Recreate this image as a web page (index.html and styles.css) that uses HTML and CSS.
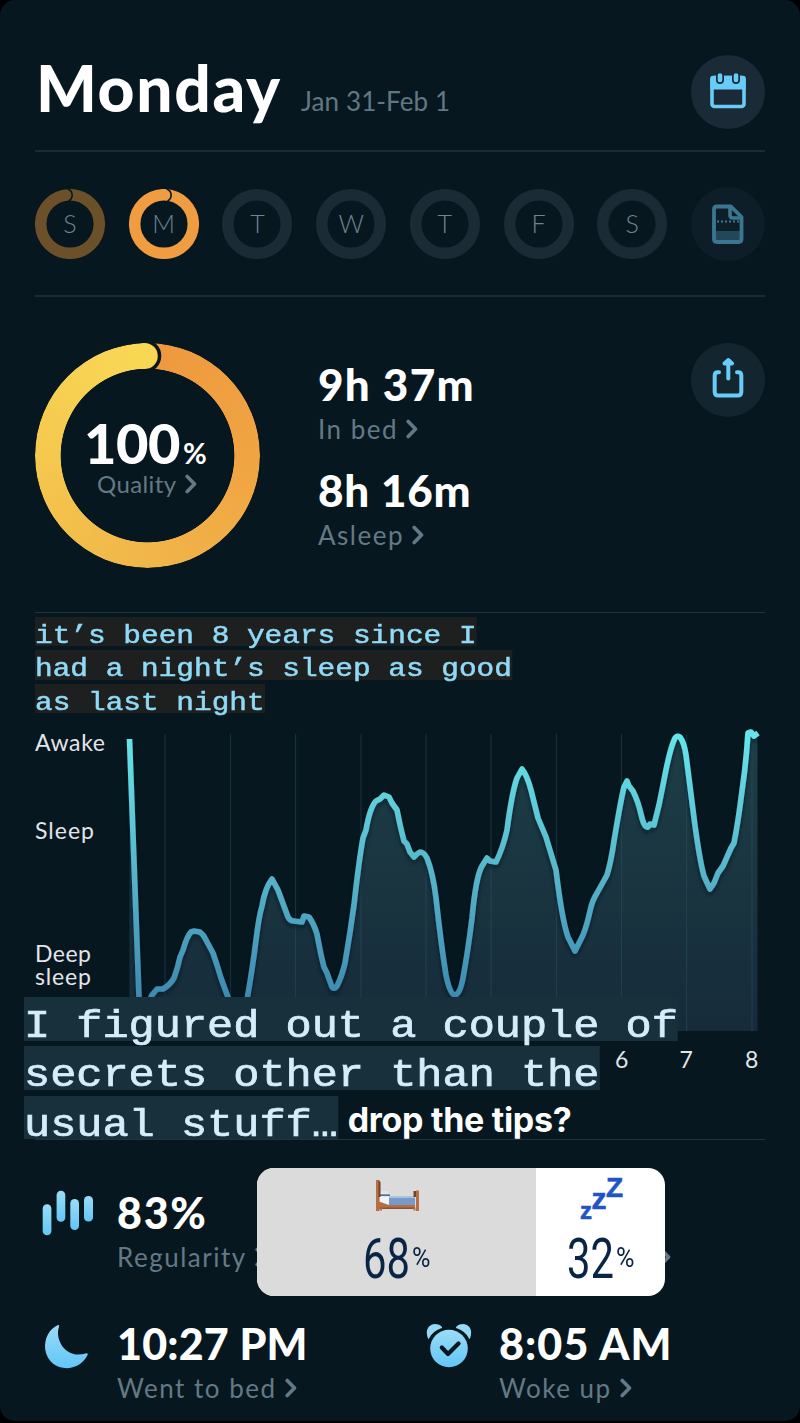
FILE: index.html
```html
<!DOCTYPE html>
<html lang="en">
<head>
<meta charset="utf-8">
<title>Sleep journal</title>
<link rel="stylesheet" href="styles.css">
</head>
<body>
<main class="screen">
  <header class="header">
    <h1 class="title">Monday</h1>
    <span class="date">Jan 31-Feb 1</span>
    <button class="round-btn" aria-label="Calendar">
      <svg width="74" height="74" viewBox="0 0 74 74">
        <rect x="21" y="22.5" width="32" height="29" rx="2.5" fill="none" stroke="#69cbf8" stroke-width="3.6"/>
        <path d="M19.200 23.500q0-2.800 2.800-2.800h30q2.800 0 2.800 2.800V34.600H19.200z" fill="#69cbf8"/>
        <path d="M29 21v4M45 21v4" stroke="#1a2a36" stroke-width="8" stroke-linecap="round"/>
        <path d="M29 20.500v4.500M45 20.500v4.500" stroke="#69cbf8" stroke-width="4.600" stroke-linecap="round"/>
      </svg>
    </button>
  </header>

  <nav class="days">
    <div class="day past"><svg viewBox="0 0 70 70"><circle cx="35" cy="35" r="29.300"/><path d="M32.500 0C38.500 2 38.500 9.500 33.500 12"/></svg><span>S</span></div>
    <div class="day current"><svg viewBox="0 0 70 70"><circle cx="35" cy="35" r="29.300"/><path d="M37.500 0C43.500 2 43.500 9.500 38.500 12"/></svg><span>M</span></div>
    <div class="day"><svg viewBox="0 0 70 70"><circle cx="35" cy="35" r="29.300"/></svg><span>T</span></div>
    <div class="day"><svg viewBox="0 0 70 70"><circle cx="35" cy="35" r="29.300"/></svg><span>W</span></div>
    <div class="day"><svg viewBox="0 0 70 70"><circle cx="35" cy="35" r="29.300"/></svg><span>T</span></div>
    <div class="day"><svg viewBox="0 0 70 70"><circle cx="35" cy="35" r="29.300"/></svg><span>F</span></div>
    <div class="day"><svg viewBox="0 0 70 70"><circle cx="35" cy="35" r="29.300"/></svg><span>S</span></div>
    <button class="round-btn dim" aria-label="Notes">
      <svg width="74" height="74" viewBox="0 0 74 74">
        <path d="M24 44h26v11H24z" fill="#234658"/>
        <path d="M26 19.500h14L50.500 30v22q0 3-3 3H26q-3 0-3-3V22.500q0-3 3-3z" fill="none" stroke="#3b7691" stroke-width="3.800" stroke-linejoin="round"/>
        <path d="M39 20v8q0 3 3 3h8" fill="none" stroke="#3b7691" stroke-width="3.600"/>
        <path d="M26 34.500h22" stroke="#3b7691" stroke-width="2" stroke-dasharray="2 2"/>
      </svg>
    </button>
  </nav>

  <section class="summary">
    <div class="donut">
      <div class="donut-ring"></div>
      <svg class="donut-cap" viewBox="0 0 225 225">
        <circle cx="109.500" cy="13" r="13" fill="#f8d753"/>
        <path d="M109.800-1.800A14.800 14.800 0 0 1 109.800 27.800" fill="none" stroke="#07171f" stroke-width="3.400"/>
      </svg>
      <div class="donut-text">
        <div class="score">100<small>%</small></div>
        <div class="label quality">Quality<svg class="chev" viewBox="0 0 12 20"><path d="M2.200 2.500L9.500 10l-7.300 7.500"/></svg></div>
      </div>
    </div>
    <div class="durations">
      <div class="value v1">9h 37m</div>
      <div class="label l1">In bed<svg class="chev" viewBox="0 0 12 20"><path d="M2.200 2.500L9.500 10l-7.300 7.500"/></svg></div>
      <div class="value second v2">8h 16m</div>
      <div class="label l2">Asleep<svg class="chev" viewBox="0 0 12 20"><path d="M2.200 2.500L9.500 10l-7.300 7.500"/></svg></div>
    </div>
    <button class="round-btn share" aria-label="Share">
      <svg width="74" height="74" viewBox="0 0 74 74" fill="none" stroke="#69cbf8" stroke-width="4" stroke-linecap="round" stroke-linejoin="round">
        <path d="M28 29.300h-1q-3.300 0-3.300 3.300v16.500q0 3.500 3.500 3.500h19.600q3.500 0 3.500-3.500V32.600q0-3.300-3.300-3.300h-1"/>
        <path d="M37.300 35.500V20"/><path d="M33.500 20.500l3.800-3.500 3.800 3.500z" fill="#69cbf8"/>
      </svg>
    </button>
  </section>

  <section class="analysis">
    <div class="note"><p>it’s been 8 years since I</p><p>had a night’s sleep as good</p><p>as last night</p></div>
    <svg class="chart" viewBox="35 722 730 360" role="img">
      <defs>
        <linearGradient id="stroke" gradientUnits="userSpaceOnUse" x1="0" y1="735" x2="0" y2="1000"><stop offset="0" stop-color="#65e5eb"/><stop offset=".5" stop-color="#57b7cb"/><stop offset="1" stop-color="#3d89b0"/></linearGradient>
        <linearGradient id="area" gradientUnits="userSpaceOnUse" x1="0" y1="735" x2="0" y2="1031"><stop offset="0" stop-color="#1d3e46"/><stop offset="1" stop-color="#162b3a"/></linearGradient>
        <filter id="shade" x="-5%" y="-5%" width="110%" height="115%"><feDropShadow dx="0" dy="3" stdDeviation="2" flood-color="#04121a" flood-opacity=".55"/></filter>
      </defs>
      <path fill="url(#area)" d="M129.500 739L140 1010L151 997L157 989L163 989L172 980L180 955L187 938L193 931L200 932L207 941L214 954L220 970L229 997L238 1015L247 997L252 970L256 940L261 908L266 888L272 878L278 890L284 905L290 920L302 922L304 916L310 918L316 932L322 955L327 973L334 989L341 976L347 950L354 900L359 858L364 832L370 810L375 801L380 798L384 795L389 797L396 808L400 823L404 841L410 852L414 857L420 852L426 857L432 875L438 915L444 960L450 989L455 995L460 987L466 960L472 910L477 880L481 867L487 860L495 862L501 850L507 825L513 792L518 775L522 769L528 780L534 798L540 823L548 842L556 870L562 905L568 935L575 951L583 935L588 918L592 902L598 890L607 875L612 855L618 818L622 795L627 781L634 792L639 805L643 820L648 827L654 825L659 805L664 780L669 755L673 742L677 736L681 737L685 748L691 790L698 845L704 876L710 889L717 876L724 862L733 842L740 805L745 765L749 735H757.500V1031H129.500z"/>
      <path stroke="#2c5a68" stroke-opacity=".38" stroke-width="1.200" d="M165 734V1031M230.500 734V1031M295.500 734V1031M361 734V1031M426 734V1031M491 734V1031M556.500 734V1031M621.500 734V1031M686.500 734V1031M752 734V1031"/>
      <path filter="url(#shade)" fill="none" stroke="url(#stroke)" stroke-width="5.600" stroke-linejoin="round" d="M129.500 739L139 997L142 1010L148 1004L152 995L157 989L163 989Q170 985 174 978Q178 967 180 957L183 950Q187 936 191 932L194 931L200 932Q204 935 206 940L213 953L217 965L221 978L229 1000L238 1020L247 1000Q253 965 256 940Q259 916 262 906Q265 888 272 879L278 890L288 917Q290 921 294 921L302 922L304 916L309 917Q314 924 317 934Q321 956 324 967L327 973L332 987Q334 990 337 986Q342 976 345 963Q350 934 354 905Q359 860 363 838L366 830Q370 807 376 801L380 799L384 795L389 797L392 803L397 810Q400 826 404 841L407 844L410 852L414 857L417 854L420 852Q424 852 427 858Q433 873 436 898Q441 944 446 975Q450 995 455 995Q460 994 463 978Q468 951 472 918Q476 876 482 866L487 858L490 861L496 862Q503 848 507 830Q512 792 517 778L522 769Q527 775 531 790L538 818L546 837L549 847L556 870Q562 920 568 937L575 951L583 935Q587 925 590 911Q592 901 597 893L607 875Q611 862 614 841Q621 799 624 787L627 781L629 786L633 791Q638 801 641 814Q644 828 648 827L650 824L654 825L659 805L664 780Q670 748 675 738Q677 735 680 737Q684 742 686 755L693 810Q699 858 704 876L710 889L714 883L718 873L723 866L731 848L734 843Q738 823 742 791Q746 764 748 733L751 732L754 736L758 733"/>
      <g class="axis">
        <text x="35" y="751" textLength="70">Awake</text><text x="35" y="839" textLength="59">Sleep</text>
        <text x="35" y="962" textLength="56">Deep</text><text x="35" y="985" textLength="56">sleep</text>
        <text x="615" y="1067.500">6</text><text x="679.500" y="1067.500">7</text><text x="745" y="1067.500">8</text>
      </g>
    </svg>
    <div class="caption"><p>I figured out a couple of</p><p>secrets other than the</p><div class="last"><p>usual stuff…</p><b>drop the tips?</b></div></div>
  </section>

  <section class="metrics">
    <div class="metric">
      <svg class="icon" viewBox="0 0 60 50"><defs><linearGradient id="sky" x1="0" y1="0" x2="0" y2="1"><stop offset="0" stop-color="#9adcf7"/><stop offset="1" stop-color="#62c6f6"/></linearGradient></defs>
        <g fill="url(#sky)"><rect x="7.700" y="13.300" width="8.700" height="31" rx="4.300"/><rect x="21.600" y="-.300" width="8.700" height="31" rx="4.300"/><rect x="35.300" y="8" width="8.700" height="31" rx="4.300"/><rect x="49" y="5" width="9" height="25.500" rx="4.300"/></g></svg>
      <div><div class="value m1">83%</div><div class="label n1">Regularity<svg class="chev" viewBox="0 0 12 20"><path d="M2.200 2.500L9.500 10l-7.300 7.500"/></svg></div></div>
    </div>
    <div class="metric hidden-metric"><svg class="chev" viewBox="0 0 12 20"><path d="M2.200 2.500L9.500 10l-7.300 7.500"/></svg></div>
    <div class="metric">
      <svg class="icon" viewBox="0 0 60 50"><path fill="url(#sky)" d="M22.500 3.200Q24.800 2.200 24 4.800C19.500 18 31 37.500 50.500 31.500Q53.500 30.500 52.600 33C43 52.500 13.500 50 10.200 27.500C9 16 14.500 7 22.500 3.200z"/></svg>
      <div><div class="value m3">10:27 PM</div><div class="label n3">Went to bed<svg class="chev" viewBox="0 0 12 20"><path d="M2.200 2.500L9.500 10l-7.300 7.500"/></svg></div></div>
    </div>
    <div class="metric">
      <svg class="icon" viewBox="0 0 60 50"><circle cx="32" cy="26.500" r="18.800" fill="url(#sky)"/><path d="M24.800 25.500l6.200 6.500 10.500-10.500" fill="none" stroke="#07171f" stroke-width="4.200" stroke-linecap="round" stroke-linejoin="round"/><path transform="translate(0 -1)" fill="#92daf8" d="M11 17.500C6 5 17.500-.500 24.500 5.500Q26 7 23.500 7.500Q15.500 10.500 12.300 17Q11.500 18.500 11 17.500zM53 17.500C58 5 46.500-.500 39.500 5.500Q38 7 40.500 7.500Q48.500 10.500 51.700 17Q52.500 18.500 53 17.500z"/></svg>
      <div><div class="value m4">8:05 AM</div><div class="label n4">Woke up<svg class="chev" viewBox="0 0 12 20"><path d="M2.200 2.500L9.500 10l-7.300 7.500"/></svg></div></div>
    </div>
    <div class="poll">
      <div class="option chosen">
        <svg class="emoji" viewBox="0 0 44 44"><path fill="#f0f4f8" d="M5 18h10l3 3v8H5z"/><path fill="#dce8f2" d="M5 15q7-3 9 1l1 4H5z"/><path fill="#384552" d="M5 17.500h10v1.300H5z"/><path fill="#779bc8" d="M14 19h26v10H14z"/><path fill="#a8c2df" d="M14 19h26v2H14z"/><path fill="#b66f43" d="M4 24.500l10 3.500h26v4H4z"/><path fill="#8e5231" d="M4 30.500h36v1.500H4z"/><path fill="#b66f43" d="M1 3h3.500v31H1z"/><path fill="#754127" d="M3.500 3.500L5.500 5v15h-2z"/><path fill="#754127" d="M38.500 14h3v6h-3z"/><path fill="#b66f43" d="M41 13.500h3v20.500h-3zM5 30.500h2v3H5zM38.500 30.500h2v3h-2z"/></svg>
        <div class="pct"><span>68</span><small>%</small></div>
      </div>
      <div class="option">
        <svg class="emoji" viewBox="0 0 44 44"><g class="zzz"><text x="1" y="41.500" font-size="24">z</text><text x="12.500" y="31.500" font-size="30">z</text><text x="27" y="20" font-size="28">Z</text></g></svg>
        <div class="pct"><span>32</span><small>%</small></div>
      </div>
    </div>
  </section>
</main>
</body>
</html>
```
FILE: styles.css
```css
* { box-sizing: border-box; }
body { margin: 0; background: #000; font-family: Lato, sans-serif; }
h1, p { margin: 0; }
button { border: 0; padding: 0; font: inherit; }

.screen { width: 800px; height: 1421px; margin-bottom: 2px; padding: 0 35px; background: #07171f; border-radius: 15px; overflow: hidden; }

.header { display: flex; align-items: flex-start; height: 152px; padding-top: 55px; border-bottom: 2px solid #1b2a35; }
.title { color: #fff; font-size: 64px; line-height: 66px; font-weight: 900; letter-spacing: 1.7px; width: 266px; padding-left: 1px; white-space: nowrap; }
.date { margin-top: 32px; color: #627784; font-size: 26px; line-height: 28px; letter-spacing: 0.1px; }
.round-btn { margin-left: auto; width: 74px; height: 74px; border-radius: 50%; background: #1a2a36; flex: none; }
.round-btn svg { display: block; }
.round-btn.dim { margin: 0; background: #0e1e28; }
.round-btn.share { background: #132630; }

.days { display: flex; justify-content: space-between; align-items: center; height: 145px; border-bottom: 2px solid #1b2a35; }
.day { display: grid; place-items: center; width: 70px; height: 70px; }
.day > * { grid-area: 1 / 1; }
.day svg { width: 70px; height: 70px; }
.day circle { fill: none; stroke: #1a2b36; stroke-width: 11.5; }
.day path { fill: none; stroke: #07171f; stroke-width: 1.6; }
.day.past circle { stroke: #6b502a; }
.day.current circle { stroke: #ef9d40; }
.day span { color: #708491; font-size: 25px; line-height: 28px; padding-bottom: 2px; font-weight: 300; }

.summary { display: flex; align-items: flex-start; height: 316px; padding-top: 46px; border-bottom: 1px solid #203440; }
.donut { display: grid; width: 225px; height: 225px; }
.donut > * { grid-area: 1 / 1; z-index: 1; }
.donut .donut-ring { z-index: 0; border-radius: 50%; background: conic-gradient(#ef983e, #f0a743 30%, #f1b74a 52%, #f5c84e 75%, #f9d956); -webkit-mask: radial-gradient(closest-side, transparent 86.5px, #000 87.2px); mask: radial-gradient(closest-side, transparent 86.5px, #000 87.2px); }
.donut-cap { width: 225px; height: 225px; overflow: visible; }
.donut-text { padding-top: 72px; }
.score { padding-left: 49px; height: 56px; color: #fff; font-size: 56px; line-height: 56px; font-weight: 900; white-space: nowrap; letter-spacing: -0.5px; }
.score small { font-size: 29px; font-weight: 700; margin-left: 3px; }
.label { display: flex; align-items: center; color: #647986; font-size: 26px; line-height: 30px; white-space: nowrap; letter-spacing: 1.5px; }
.label.quality { padding-left: 62px; font-size: 24px; line-height: 26px; letter-spacing: 0.4px; }
.chev { width: 12px; height: 20px; margin-left: 8px; flex: none; fill: none; stroke: #647986; stroke-width: 3.6; stroke-linecap: round; stroke-linejoin: round; }
.durations { padding: 19px 0 0 58px; }
.value { color: #fff; font-size: 44px; line-height: 44px; font-weight: 900; white-space: nowrap; margin-bottom: 8px; }
.value.second { margin-top: 24px; }
.v1 { letter-spacing: 1.3px; }
.v2 { letter-spacing: 0.7px; }

.analysis { position: relative; height: 527px; padding-top: 4px; border-bottom: 1px solid #203440; }
.note { height: 105px; color: #90daf8; font-family: "Courier New", "Liberation Mono", monospace; font-size: 25.6px; -webkit-text-stroke: 0.5px #90daf8; }
.note p { width: max-content; height: 29.4px; margin-bottom: 4px; line-height: 40px; background: #1d201f; transform: scaleX(1.15); transform-origin: 0 0; }
.chart { display: block; width: 730px; height: 360px; }
.axis text { fill: #e2e5ea; font-size: 23px; }
.caption { position: absolute; left: -11px; top: 384px; color: #d5edfa; font-family: "Courier New", "Liberation Mono", monospace; font-size: 38px; white-space: nowrap; }
.caption p { width: max-content; height: 43.6px; margin-bottom: 5.8px; line-height: 60px; background: #182f3c; transform: scaleX(1.147); transform-origin: 0 0; -webkit-text-stroke: 0.7px #d5edfa; }
.caption .last { display: flex; align-items: flex-start; }
.caption b { margin: 7px 0 0 50px; color: #fff; font: 700 34px/34px Inter, sans-serif; letter-spacing: -0.3px; }

.metrics { position: relative; display: grid; grid-template-columns: 382px 1fr; grid-auto-rows: 131px; padding-top: 51px; }
.metric { display: flex; align-items: flex-start; }
.metric .icon { width: 60px; height: 50px; margin-right: 22px; flex: none; overflow: visible; }
.metric .value { font-size: 43px; margin-bottom: 7px; }
.m1 { letter-spacing: 1.7px; }
.m3 { letter-spacing: 0.2px; }
.m4 { letter-spacing: 1.1px; }
.hidden-metric { padding: 56px 0 0 242px; }
.hidden-metric .chev { margin: 0; }
.poll { position: absolute; left: 222px; top: 28px; display: flex; width: 408px; height: 128px; border-radius: 17px; overflow: hidden; background: #fff; color: #0a2445; }
.option { width: 129px; display: flex; flex-direction: column; align-items: center; padding-top: 9px; }
.option.chosen { width: 279px; background: #dbdbdb; }
.emoji { width: 44px; height: 44px; overflow: visible; }
.zzz text { fill: #2053c5; stroke: #2053c5; stroke-width: 0.6; font-family: "Liberation Sans", sans-serif; font-weight: 700; }
.pct { display: flex; align-items: flex-start; margin-top: 6px; font-family: Roboto, sans-serif; }
.pct span { width: 49px; font-size: 55px; line-height: 64px; transform: scaleX(.76); transform-origin: 0 0; }
.pct small { width: 18px; font-size: 28px; line-height: 62px; transform: scaleX(.9); transform-origin: 0 0; }
```
